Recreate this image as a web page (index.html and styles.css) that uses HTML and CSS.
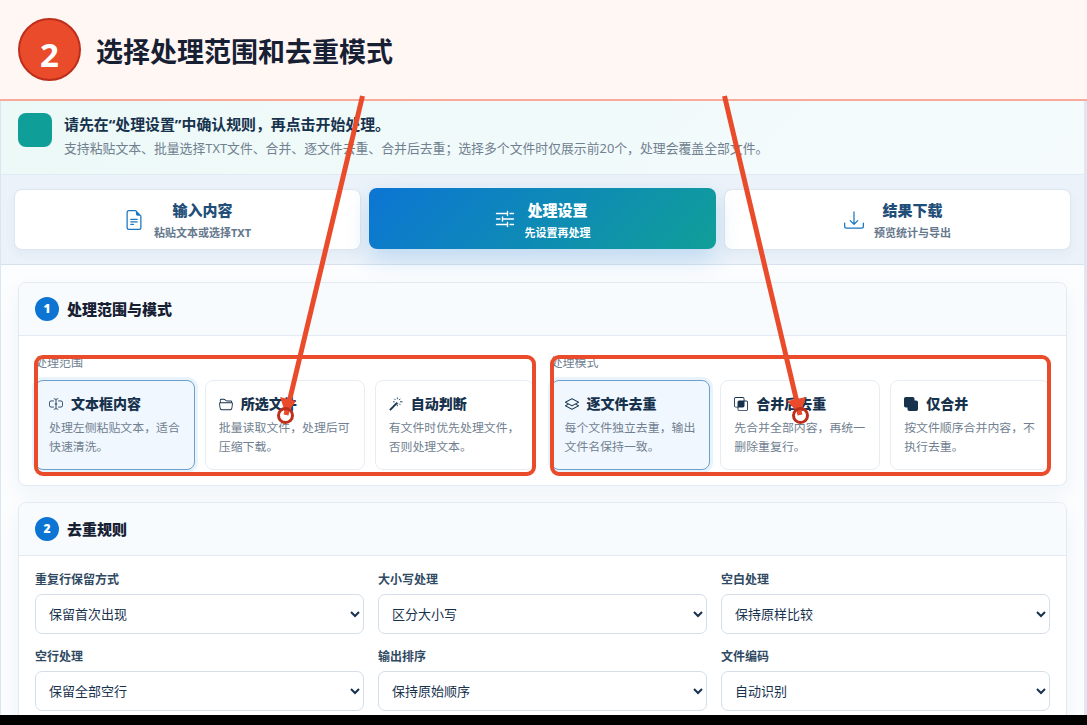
FILE: index.html
```html
<!DOCTYPE html>
<html lang="zh-CN">
<head>
    <meta charset="UTF-8">
    <title>选择处理范围和去重模式</title>
    <link rel="stylesheet" href="styles.css">
</head>
<body>
    <div class="page">
        <header class="banner">
            <span class="step-badge">2</span>
            <h1>选择处理范围和去重模式</h1>
        </header>

        <div class="app">
            <div class="notice">
                <div class="notice-icon"></div>
                <div>
                    <div class="notice-title">请先在“处理设置”中确认规则，再点击开始处理。</div>
                    <div class="notice-text">支持粘贴文本、批量选择TXT文件、合并、逐文件去重、合并后去重；选择多个文件时仅展示前20个，处理会覆盖全部文件。</div>
                </div>
            </div>

            <nav class="tabs">
                <div class="tab">
                    <svg class="tab-icon" viewBox="0 0 16 16" fill="currentColor"><path d="M5.5 7a.5.5 0 0 0 0 1h5a.5.5 0 0 0 0-1zM5 9.5a.5.5 0 0 1 .5-.5h5a.5.5 0 0 1 0 1h-5a.5.5 0 0 1-.5-.5m0 2a.5.5 0 0 1 .5-.5h2a.5.5 0 0 1 0 1h-2a.5.5 0 0 1-.5-.5"/><path d="M9.5 0H4a2 2 0 0 0-2 2v12a2 2 0 0 0 2 2h8a2 2 0 0 0 2-2V4.5zm0 1v2A1.5 1.5 0 0 0 11 4.5h2V14a1 1 0 0 1-1 1H4a1 1 0 0 1-1-1V2a1 1 0 0 1 1-1z"/></svg>
                    <div class="tab-text"><strong>输入内容</strong><small>粘贴文本或选择TXT</small></div>
                </div>
                <div class="tab active">
                    <svg class="tab-icon" viewBox="0 0 20 20" fill="none" stroke="currentColor" stroke-width="1.4" stroke-linecap="round"><path d="M1.5 4.5h11M15 4.5h3.500M12.500 2.500v4M1.500 10h3.500M7.500 10h11M7.500 8v4M1.500 15.500h11M15 15.500h3.500M12.500 13.500v4"/></svg>
                    <div class="tab-text"><strong>处理设置</strong><small>先设置再处理</small></div>
                </div>
                <div class="tab">
                    <svg class="tab-icon" viewBox="0 0 16 16" fill="currentColor"><path d="M.5 9.900a.5.5 0 0 1 .5.5v2.500a1 1 0 0 0 1 1h12a1 1 0 0 0 1-1v-2.500a.5.5 0 0 1 1 0v2.500a2 2 0 0 1-2 2H2a2 2 0 0 1-2-2v-2.500a.5.5 0 0 1 .5-.5"/><path d="M7.646 11.854a.5.5 0 0 0 .708 0l3-3a.5.5 0 0 0-.708-.708L8.500 10.293V1.500a.5.5 0 0 0-1 0v8.793L5.354 8.146a.5.5 0 1 0-.708.708z"/></svg>
                    <div class="tab-text"><strong>结果下载</strong><small>预览统计与导出</small></div>
                </div>
            </nav>

            <main class="content">
                <section class="card">
                    <div class="card-header"><span class="num">1</span><h2>处理范围与模式</h2></div>
                    <div class="card-body groups">
                        <div class="group">
                            <div class="group-label">处理范围</div>
                            <div class="choices">
                                <div class="choice selected">
                                    <div class="choice-title">
                                        <svg viewBox="0 0 16 16" fill="none" stroke="currentColor"><path d="M5.500 4.500H2.500a2 2 0 0 0-2 2v3a2 2 0 0 0 2 2h3M10.500 4.500h3a2 2 0 0 1 2 2v3a2 2 0 0 1-2 2h-3M5.500 2c1.500 0 2.500.5 2.500 1.500v9c0 1-1 1.500-2.500 1.500M10.500 2C9 2 8 2.500 8 3.500M10.500 14C9 14 8 13.500 8 12.500M6.500 8h3"/></svg>
                                        文本框内容
                                    </div>
                                    <p>处理左侧粘贴文本，适合快速清洗。</p>
                                </div>
                                <div class="choice">
                                    <div class="choice-title">
                                        <svg viewBox="0 0 16 16" fill="currentColor"><path d="M1 3.500A1.500 1.500 0 0 1 2.500 2h2.764c.958 0 1.760.56 2.311 1.184C7.985 3.648 8.480 4 9 4h4.500A1.500 1.500 0 0 1 15 5.500v.64c.57.265.94.876.856 1.546l-.64 5.124A2.500 2.500 0 0 1 12.733 15H3.266a2.500 2.500 0 0 1-2.481-2.190l-.64-5.124A1.500 1.500 0 0 1 1 6.140zM2 6h12v-.5a.5.5 0 0 0-.5-.5H9c-.964 0-1.710-.629-2.174-1.154C6.374 3.334 5.820 3 5.264 3H2.500a.5.5 0 0 0-.5.5zm-.367 1a.5.5 0 0 0-.496.562l.64 5.124A1.500 1.500 0 0 0 3.266 14h9.468a1.500 1.500 0 0 0 1.489-1.314l.64-5.124A.5.5 0 0 0 14.367 7z"/></svg>
                                        所选文件
                                    </div>
                                    <p>批量读取文件，处理后可压缩下载。</p>
                                </div>
                                <div class="choice">
                                    <div class="choice-title">
                                        <svg viewBox="0 0 16 16" fill="none" stroke="currentColor"><path d="M9.500.5v2M9.500 8.500v2M4.500 5.500h2M12.500 5.500h3M6 2l1.500 1.500M13 2l-1.500 1.500M11.500 7.500L13 9"/><path d="M1 15L9.500 6.500" stroke-width="2.200"/></svg>
                                        自动判断
                                    </div>
                                    <p>有文件时优先处理文件，否则处理文本。</p>
                                </div>
                            </div>
                        </div>
                        <div class="group">
                            <div class="group-label">处理模式</div>
                            <div class="choices">
                                <div class="choice selected">
                                    <div class="choice-title">
                                        <svg viewBox="0 0 16 16" fill="currentColor"><path d="M8.235 1.559a.5.5 0 0 0-.47 0l-7.500 4a.5.5 0 0 0 0 .882L3.188 8 .264 9.559a.5.5 0 0 0 0 .882l7.500 4a.5.5 0 0 0 .47 0l7.500-4a.5.5 0 0 0 0-.882L12.813 8l2.922-1.559a.5.5 0 0 0 0-.882zm3.515 7.008L14.438 10 8 13.433 1.562 10 4.250 8.567l3.515 1.874a.5.5 0 0 0 .47 0zM8 9.433 1.562 6 8 2.567 14.438 6z"/></svg>
                                        逐文件去重
                                    </div>
                                    <p>每个文件独立去重，输出文件名保持一致。</p>
                                </div>
                                <div class="choice">
                                    <div class="choice-title">
                                        <svg viewBox="0 0 16 16" fill="currentColor"><path d="M0 2a2 2 0 0 1 2-2h8a2 2 0 0 1 2 2v2h2a2 2 0 0 1 2 2v8a2 2 0 0 1-2 2H6a2 2 0 0 1-2-2v-2H2a2 2 0 0 1-2-2zm5 10v2a1 1 0 0 0 1 1h8a1 1 0 0 0 1-1V6a1 1 0 0 0-1-1h-2v5a2 2 0 0 1-2 2zm6-8V2a1 1 0 0 0-1-1H2a1 1 0 0 0-1 1v8a1 1 0 0 0 1 1h2V6a2 2 0 0 1 2-2z"/></svg>
                                        合并后去重
                                    </div>
                                    <p>先合并全部内容，再统一删除重复行。</p>
                                </div>
                                <div class="choice">
                                    <div class="choice-title">
                                        <svg viewBox="0 0 16 16" fill="currentColor"><path d="M0 2a2 2 0 0 1 2-2h8a2 2 0 0 1 2 2v2h2a2 2 0 0 1 2 2v8a2 2 0 0 1-2 2H6a2 2 0 0 1-2-2v-2H2a2 2 0 0 1-2-2z"/></svg>
                                        仅合并
                                    </div>
                                    <p>按文件顺序合并内容，不执行去重。</p>
                                </div>
                            </div>
                        </div>
                    </div>
                </section>

                <section class="card">
                    <div class="card-header"><span class="num">2</span><h2>去重规则</h2></div>
                    <div class="card-body fields">
                        <label class="field">重复行保留方式<select><option>保留首次出现</option></select></label>
                        <label class="field">大小写处理<select><option>区分大小写</option></select></label>
                        <label class="field">空白处理<select><option>保持原样比较</option></select></label>
                        <label class="field">空行处理<select><option>保留全部空行</option></select></label>
                        <label class="field">输出排序<select><option>保持原始顺序</option></select></label>
                        <label class="field">文件编码<select><option>自动识别</option></select></label>
                    </div>
                </section>
            </main>
        </div>

        <!-- callout boxes and arrows over the app -->
        <svg class="callouts" width="1087" height="715" viewBox="0 0 1087 715">
            <g fill="none" stroke="#ea4b2a" stroke-width="4">
                <rect x="36" y="357" width="498" height="117" rx="7"/>
                <rect x="552" y="357" width="497" height="117" rx="7"/>
            </g>
            <path class="arrow-line" d="M362.500 96L286 415M724.500 96L800 415"/>
            <path class="arrow-head" d="M286 415l-6-18 16 4zM800 415l-13-14 19-4z"/>
            <circle class="arrow-dot" cx="285.500" cy="415.500" r="7"/>
            <circle class="arrow-dot" cx="800.500" cy="415.500" r="7"/>
        </svg>
    </div>
</body>
</html>
```

FILE: styles.css
```css
* {
    box-sizing: border-box;
}

body {
    margin: 0;
    background-color: #000;
    color: #17324d;
    font-family: "Noto Sans", "Noto Sans CJK SC", sans-serif;
}

.page {
    position: relative;
    height: 715px;
    overflow: hidden;
    background-color: #dfe8f2;
}

h1, h2, p {
    margin: 0;
}

/* Banner */
.banner {
    display: flex;
    align-items: center;
    height: 101px;
    padding: 0 18px;
    gap: 15px;
    background-color: #fff7f4;
    border-bottom: 2px solid #f8aa9d;
}

.step-badge {
    display: flex;
    align-items: center;
    justify-content: center;
    width: 63px;
    height: 63px;
    padding-top: 9px;
    border: 2px solid #bd2f1b;
    border-radius: 50%;
    background-color: #ea4b2a;
    color: #fff;
    font-size: 33px;
    font-weight: bold;
    line-height: 1;
}

.banner h1 {
    padding-top: 4px;
    color: #172033;
    font-size: 27px;
    line-height: 40px;
}

.app {
    width: 1084px;
    height: 620px;
    border-left: 1px solid #dce6f0;
    background-color: #fbfdff;
}

/* Notice */
.notice {
    display: flex;
    gap: 12px;
    height: 74px;
    padding: 12px 17px;
    background: linear-gradient(135deg, #ecf9f7, #f5fbfd);
    border-bottom: 1px solid #e0eaf3;
}

.notice-icon {
    width: 34px;
    height: 34px;
    border-radius: 8px;
    background-color: #109f98;
}

.notice-title {
    color: #17324d;
    font-size: 14.9px;
    font-weight: bold;
    line-height: 22px;
}

.notice-text {
    margin-top: 3px;
    color: #708090;
    font-size: 12.85px;
    line-height: 20px;
}

/* Tabs */
.tabs {
    display: grid;
    grid-template-columns: repeat(3, 1fr);
    gap: 8px;
    height: 90px;
    padding: 14px 13px;
    background-color: #ebf2f9;
    border-bottom: 1px solid #d7e2ee;
}

.tab {
    display: flex;
    align-items: center;
    justify-content: center;
    gap: 10px;
    border: 1px solid #dce7f1;
    border-radius: 8px;
    background-color: #fff;
    color: #1f4f78;
    box-shadow: 0 4px 10px rgba(30, 70, 110, 0.05);
}

.tab-icon {
    width: 20px;
    height: 20px;
    color: #1977c0;
}

.tab-text {
    display: flex;
    flex-direction: column;
    align-items: center;
    gap: 2px;
    padding-top: 2px;
}

.tab strong {
    font-size: 15px;
    font-weight: 800;
    line-height: 22px;
}

.tab small {
    color: #65788c;
    font-size: 11px;
    font-weight: bold;
    line-height: 20px;
}

.tab.active {
    transform: translateY(-1px);
    border: none;
    background: linear-gradient(135deg, #0c75d4, #109f98);
    color: #fff;
    box-shadow: 0 10px 24px rgba(12, 117, 212, 0.2);
}

.tab.active .tab-text {
    padding-top: 4px;
}

.tab.active .tab-icon,
.tab.active small {
    color: #fff;
}

/* Sections */
.content {
    display: flex;
    flex-direction: column;
    gap: 16px;
    padding: 17px 17px 0;
}

.card {
    border: 1px solid #e2eaf2;
    border-radius: 8px;
    background-color: #fff;
    box-shadow: 0 8px 22px rgba(30, 70, 110, 0.05);
    overflow: hidden;
}

.card-header {
    display: flex;
    align-items: center;
    gap: 8px;
    height: 53px;
    padding: 0 16px;
    background-color: #f7fbfe;
    border-bottom: 1px solid #e2ebf3;
}

.num {
    width: 24px;
    height: 24px;
    border-radius: 50%;
    background-color: #0c75d4;
    color: #fff;
    font-size: 12px;
    font-weight: 900;
    line-height: 24px;
    text-align: center;
}

.card-header h2 {
    color: #172033;
    font-size: 15px;
    font-weight: 800;
    line-height: 24px;
}

.card-body {
    padding: 16px;
}

.groups {
    display: grid;
    grid-template-columns: 1fr 1fr;
    gap: 16px;
    padding-bottom: 15px;
}

.group-label {
    height: 28px;
    color: #708090;
    font-size: 12px;
    line-height: 21px;
}

.choices {
    display: grid;
    grid-template-columns: repeat(3, 1fr);
    gap: 10px;
}

.choice {
    height: 90px;
    padding: 13px 11px 0 13px;
    border: 1px solid #e7edf3;
    border-radius: 8px;
}

.choice.selected {
    border-color: #6d9fcc;
    background-color: #f0f7fe;
    box-shadow: 0 0 0 3px rgba(12, 117, 212, 0.09);
}

.choice-title {
    display: flex;
    align-items: center;
    gap: 8px;
    color: #17324d;
    font-size: 14px;
    font-weight: 800;
    line-height: 20px;
}

.choice-title svg {
    width: 14px;
    height: 14px;
}

.choice p {
    margin-top: 4px;
    color: #708090;
    font-size: 11.9px;
    line-height: 19px;
}

/* Rule fields */
.fields {
    display: grid;
    grid-template-columns: repeat(3, 1fr);
    gap: 14px;
    padding-top: 15px;
}

.field {
    display: flex;
    flex-direction: column;
    gap: 6px;
    color: #304a63;
    font-size: 12px;
    font-weight: bold;
    line-height: 17px;
}

.field select {
    height: 40px;
    padding: 0 4px 0 9px;
    border: 1px solid #d3dee8;
    border-radius: 7px;
    background-color: #fff;
    color: #17324d;
    font-family: inherit;
    font-size: 13px;
}

/* Callouts */
.callouts {
    position: absolute;
    top: 0;
    left: 0;
}

.arrow-line {
    fill: none;
    stroke: #ea4b2a;
    stroke-width: 5;
}

.arrow-head {
    fill: #ea4b2a;
}

.arrow-dot {
    fill: none;
    stroke: #bd2f1b;
    stroke-width: 3;
}
```
